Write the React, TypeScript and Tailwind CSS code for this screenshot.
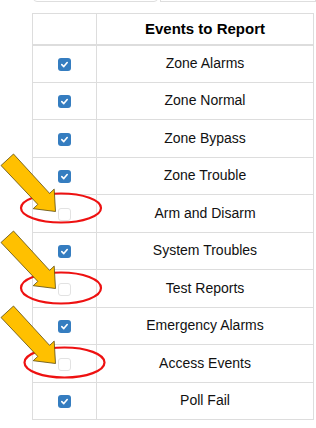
const events: { name: string; checked: boolean }[] = [
  { name: "Zone Alarms", checked: true },
  { name: "Zone Normal", checked: true },
  { name: "Zone Bypass", checked: true },
  { name: "Zone Trouble", checked: true },
  { name: "Arm and Disarm", checked: false },
  { name: "System Troubles", checked: true },
  { name: "Test Reports", checked: false },
  { name: "Emergency Alarms", checked: true },
  { name: "Access Events", checked: false },
  { name: "Poll Fail", checked: true },
];

function Box({ checked }: { checked: boolean }) {
  if (!checked) {
    return <span className="inline-block w-[13px] h-[13px] rounded-[3px] border border-[#e2e2e2] bg-white align-middle" />;
  }
  return (
    <span className="inline-flex w-[13px] h-[13px] rounded-[3px] bg-[#357dc0] items-center justify-center align-middle">
      <svg width="9" height="9" viewBox="0 0 10 10">
        <path d="M2 5.2 L4.2 7.3 L8 2.8" fill="none" stroke="#fff" strokeWidth="1.8" strokeLinecap="round" strokeLinejoin="round" />
      </svg>
    </span>
  );
}

// arrow drawn for the first callout; others are shifted down
function Arrow({ dy }: { dy: number }) {
  const pts = [
    [13.5, 154],
    [49.6, 193.4],
    [54.2, 189.1],
    [55.5, 211.5],
    [33.2, 208.7],
    [37.8, 204.4],
    [1, 165.5],
  ]
    .map(([x, y]) => `${x},${y + dy}`)
    .join(" ");
  return <polygon points={pts} fill="#ffc000" stroke="#5a4a10" strokeWidth="0.8" strokeLinejoin="miter" />;
}

export default function App() {
  return (
    <div className="relative w-[316px] h-[428px] bg-white overflow-hidden" style={{ fontFamily: '"Liberation Sans", Arial, sans-serif' }}>
      <div className="flex items-end h-[2px] overflow-hidden">
        <div className="ml-[33px] w-[125px] h-[10px] shrink-0 border border-[#dedede] rounded-b-[4px]" />
        <div className="ml-[2px] flex-1 h-[10px] border border-[#dedede]" />
      </div>
      <table className="ml-[32px] mt-[11px] w-[282px] border-collapse text-[14px] text-[#111]">
        <thead>
          <tr className="h-[31px]">
            <th className="w-[64px] border border-[#dddddd] border-b-2" />
            <th className="border border-[#dddddd] border-b-2 font-bold text-[15px] text-[#000] text-center">Events to Report</th>
          </tr>
        </thead>
        <tbody>
          {events.map((e) => (
            <tr key={e.name} className="h-[37.5px]">
              <td className="border border-[#dddddd] text-center leading-none">
                <Box checked={e.checked} />
              </td>
              <td className="border border-[#dddddd] text-center">{e.name}</td>
            </tr>
          ))}
        </tbody>
      </table>
      <svg className="absolute inset-0 pointer-events-none" width="316" height="428">
        <ellipse cx="61" cy="208" rx="40" ry="14.5" fill="none" stroke="#ee1111" strokeWidth="2.2" />
        <ellipse cx="61" cy="288" rx="40" ry="15.5" fill="none" stroke="#ee1111" strokeWidth="2.2" />
        <ellipse cx="64.5" cy="362.5" rx="40" ry="15" fill="none" stroke="#ee1111" strokeWidth="2.2" />
        <Arrow dy={0} />
        <Arrow dy={77} />
        <Arrow dy={152} />
      </svg>
    </div>
  );
}
